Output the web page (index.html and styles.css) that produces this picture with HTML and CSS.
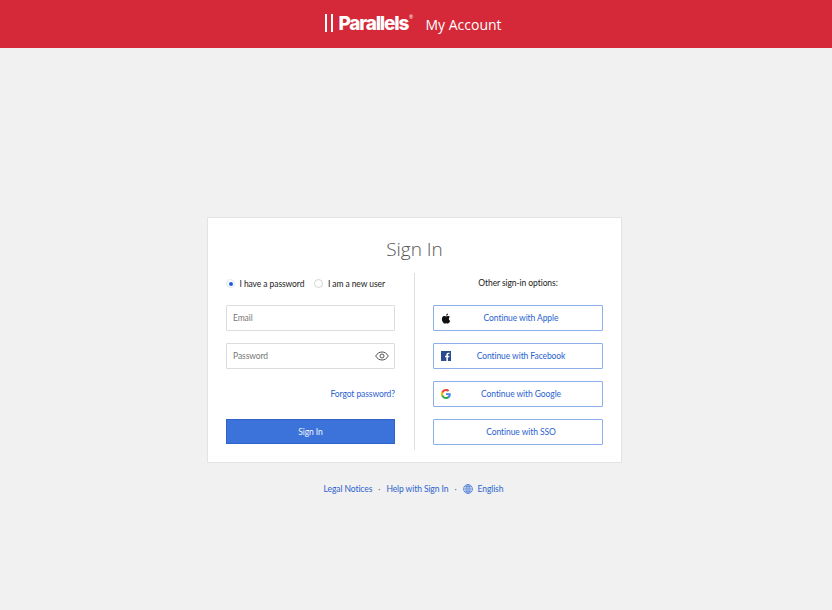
FILE: index.html
```html
<!DOCTYPE html>
<html lang="en">
<head>
<meta charset="utf-8">
<title>Parallels My Account</title>
<link rel="stylesheet" href="styles.css">
</head>
<body>
<header class="topbar">
  <div class="brand">
    <span class="bars"><i></i><i></i></span>
    <span class="wordmark">Parallels</span><span class="reg">®</span>
  </div>
  <span class="product">My Account</span>
</header>
<main class="page">
  <section class="card">
    <h1 class="title">Sign In</h1>
    <div class="columns">
      <form class="col col-left">
        <div class="radios">
          <span class="radio radio-on"></span><span class="radio-label">I have a password</span>
          <span class="radio"></span><span class="radio-label">I am a new user</span>
        </div>
        <div class="field">Email</div>
        <div class="field field-pass">Password
          <svg class="eye" width="14" height="10" viewBox="0 0 14 10" fill="none" stroke="#555" stroke-width="1"><path d="M.7 5C2.3 2.3 4.4 1 7 1s4.700 1.300 6.300 4C11.700 7.700 9.600 9 7 9S2.300 7.700.7 5z"/><circle cx="7" cy="5" r="2"/></svg>
        </div>
        <a class="forgot">Forgot password?</a>
        <div class="primary">Sign In</div>
      </form>
      <div class="col col-right">
        <div class="other">Other sign-in options:</div>
        <div class="sso">
          <svg class="ico" width="11" height="11" viewBox="0 0 24 26" fill="#111"><path d="M17.500 13.800c0-3 2.400-4.400 2.500-4.500-1.400-2-3.500-2.300-4.300-2.300-1.800-.2-3.600 1.100-4.500 1.100-.9 0-2.400-1.100-3.900-1C5 7.100 3.100 8.200 2.100 10c-2.100 3.600-.5 9 1.500 12 1 1.400 2.200 3 3.800 3 1.500-.1 2.100-1 3.900-1 1.800 0 2.400 1 4 .9 1.700 0 2.700-1.500 3.700-2.900 1.200-1.700 1.600-3.300 1.700-3.400-.1 0-3.200-1.200-3.200-4.800zM14.500 5c.8-1 1.400-2.400 1.200-3.800-1.200.1-2.600.8-3.500 1.800-.8.900-1.400 2.300-1.200 3.700 1.300.1 2.700-.7 3.500-1.700z"/></svg>
          Continue with Apple
        </div>
        <div class="sso">
          <svg class="ico" width="10" height="10" viewBox="0 0 11 11"><rect width="11" height="11" fill="#2b4a8f"/><path d="M7.600 11V6.800h1.400l.2-1.600H7.600v-1c0-.5.200-.8.800-.8h.9V2c-.2 0-.7-.1-1.300-.1-1.300 0-2.100.8-2.100 2.200v1.100H4.500v1.600h1.400V11z" fill="#fff"/></svg>
          Continue with Facebook
        </div>
        <div class="sso">
          <svg class="ico" width="10" height="10" viewBox="0 0 24 24"><path fill="#4285F4" d="M23.500 12.300c0-.9-.1-1.600-.2-2.300H12v4.500h6.500c-.3 1.500-1.100 2.700-2.400 3.600v3h3.900c2.300-2.100 3.500-5.200 3.500-8.800z"/><path fill="#34A853" d="M12 24c3.200 0 6-1.100 8-2.900l-3.900-3c-1.100.7-2.500 1.200-4.100 1.200-3.100 0-5.800-2.100-6.700-5H1.300v3.100C3.300 21.300 7.300 24 12 24z"/><path fill="#FBBC05" d="M5.300 14.300c-.5-1.500-.5-3.100 0-4.600V6.600h-4c-1.700 3.300-1.700 7.500 0 10.800z"/><path fill="#EA4335" d="M12 4.800c1.800 0 3.300.6 4.600 1.800l3.400-3.400C17.900 1.200 15.200 0 12 0 7.300 0 3.300 2.700 1.300 6.600l4 3.100c.9-2.800 3.600-4.900 6.700-4.900z"/></svg>
          Continue with Google
        </div>
        <div class="sso">Continue with SSO</div>
      </div>
    </div>
  </section>
  <nav class="foot">
    <a>Legal Notices</a><span class="dot">·</span><a>Help with Sign In</a><span class="dot">·</span>
    <svg class="globe" width="10" height="10" viewBox="0 0 12 12" fill="none" stroke="#3a6fd8" stroke-width=".8"><circle cx="6" cy="6" r="5.400"/><ellipse cx="6" cy="6" rx="2.400" ry="5.400"/><path d="M6 .6v10.800M.6 6h10.800M1.400 3.300h9.200M1.400 8.700h9.200"/></svg>
    <a>English</a>
  </nav>
</main>
</body>
</html>
```
FILE: styles.css
```css
* { box-sizing: border-box; }
html, body { margin: 0; height: 100%; }
body {
  background: #f1f1f1;
  font-family: "Lato", "Open Sans", sans-serif;
  font-size: 8.500px;
  letter-spacing: -.08px;
  color: #222;
}
.topbar {
  height: 48px;
  background: #d52838;
  display: flex;
  align-items: center;
  justify-content: center;
  color: #fff;
  padding-right: 5px;
}
.brand { display: flex; align-items: flex-start; height: 20px; width: 88px; }
.bars { display: flex; gap: 4px; margin: 0 5px 0 0; }
.bars i { display: block; width: 2px; height: 18px; background: #fff; }
.wordmark {
  font-family: "Inter", "Liberation Sans", sans-serif;
  font-weight: 800;
  font-size: 19px;
  letter-spacing: -1.200px;
  line-height: 20px;
}
.reg { font-size: 5px; line-height: 6px; margin-left: 1px; }
.product { font-family: "Open Sans", sans-serif; font-size: 14px; letter-spacing: 0; margin-left: 12px; }
.page { display: flex; flex-direction: column; align-items: center; padding-top: 169px; padding-right: 3px; }
.card {
  width: 415px;
  height: 246px;
  background: #fff;
  border: 1px solid #e3e3e3;
  padding: 0 18px;
}
.title {
  margin: 0;
  height: 44px;
  padding-top: 17.500px;
  text-align: center;
  font-family: "Open Sans", sans-serif;
  font-weight: 300;
  font-size: 19px;
  letter-spacing: 0;
  line-height: 27px;
  color: #555;
}
.columns { display: flex; margin-top: 11px; }
.col { width: 169px; display: flex; flex-direction: column; }
.col-left { margin-right: 19px; }
.col-right { border-left: 1px solid #dedede; padding-left: 18px; width: 189px; height: 177px; }
.radios { display: flex; align-items: center; height: 15px; margin-top: 3px; }
.radio {
  width: 9px; height: 9px; border-radius: 50%;
  border: 1px solid #d4d4d4; background: #fff;
  margin-right: 4.500px; flex: none; position: relative;
}
.radio-on { border-color: #dce4f5; }
.radio-on::after {
  content: ""; position: absolute; left: 1.500px; top: 1.500px;
  width: 4px; height: 4px; border-radius: 50%; background: #1e5fd8;
}
.radio-label { margin-right: 10px; white-space: nowrap; }
.field {
  height: 25.500px; margin-top: 14px;
  border: 1px solid #dcdcdc; border-radius: 1px;
  padding-left: 6px;
  display: flex; align-items: center; justify-content: space-between;
  color: #777;
}
.field + .field { margin-top: 12.500px; }
.eye { margin-right: 5px; }
.forgot {
  align-self: flex-end;
  margin-top: 19.500px;
  line-height: 12px;
  color: #2a62cf;
}
.primary {
  height: 25px; margin-top: 19px;
  background: #3c73da;
  border: 1px solid #2f63c8;
  color: #f2f5fc;
  display: flex; align-items: center; justify-content: center;
}
.other { text-align: center; height: 15px; margin-top: 3px; line-height: 15px; color: #222; }
.sso {
  position: relative;
  height: 25.500px; margin-top: 12.500px;
  border: 1px solid #8eaeea; border-radius: 1px;
  padding-left: 6px;
  display: flex; align-items: center; justify-content: center;
  color: #2a62cf;
}
.other + .sso { margin-top: 14px; }
.ico { position: absolute; left: 7px; top: 6.500px; }
.foot {
  display: flex; align-items: center; margin-top: 19px; height: 13px;
  color: #2a62cf; padding-right: 2px;
}
.dot { margin: 0 6px; color: #777; }
.globe { margin: 0 5px 0 0; }
```
